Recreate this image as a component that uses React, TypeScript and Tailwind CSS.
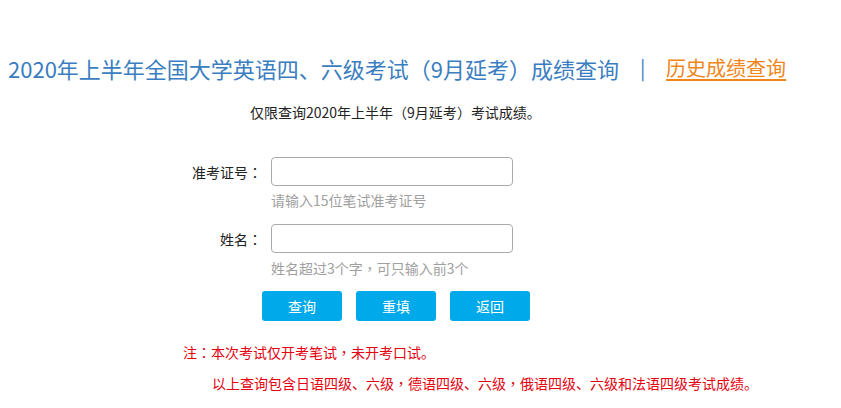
// full-width punctuation sits centred in its cell in the reference, which the TC cut of Noto does
function P({ children }: { children: string }) {
  return <span className="font-['Noto_Sans_CJK_TC',sans-serif]">{children}</span>
}

export default function App() {
  return (
    <div className="w-[841px] h-[408px] bg-white text-[#333] font-['Noto_Sans_CJK_SC','Noto_Sans',sans-serif] overflow-hidden">
      {/* title */}
      <div className="pt-[53px] pl-[8px] flex items-center h-[83px]">
        <h1 className="text-[22px] leading-[30px] text-[#3a7dc0] font-normal whitespace-nowrap">
          2020年上半年全国大学英语四、六级考试<P>（</P>9月延考<P>）</P>成绩查询
        </h1>
        <span className="w-[47px] text-center text-[20px] leading-[30px] text-[#3a7dc0]">|</span>
        <a href="#" className="text-[20px] leading-[30px] text-[#f08519] underline underline-offset-[3px] whitespace-nowrap">
          历史成绩查询
        </a>
      </div>

      <p className="mt-[19px] pl-[250px] text-[14px] leading-[20px] text-[#222]">
        仅限查询2020年上半年<P>（</P>9月延考<P>）</P>考试成绩。
      </p>

      {/* form */}
      <div className="mt-[35px]">
        <div className="flex items-center">
          <label className="w-[262px] text-right text-[14px] leading-[20px] text-[#222]">
            准考证号<P>：</P>
          </label>
          <input className="ml-[9px] w-[242px] h-[29px] border border-[#aaa] rounded-[4px] px-2 text-[14px] outline-none" />
        </div>
        <p className="mt-[4px] pl-[271px] text-[14px] leading-[20px] text-[#a0a0a0]">请输入15位笔试准考证号</p>

        <div className="mt-[14px] flex items-center">
          <label className="w-[262px] text-right text-[14px] leading-[20px] text-[#222]">
            姓名<P>：</P>
          </label>
          <input className="ml-[9px] w-[242px] h-[29px] border border-[#aaa] rounded-[4px] px-2 text-[14px] outline-none" />
        </div>
        <p className="mt-[5px] pl-[271px] text-[14px] leading-[20px] text-[#a0a0a0]">
          姓名超过3个字<P>，</P>可只输入前3个
        </p>

        <div className="mt-[13px] pl-[262px] flex gap-[14px]">
          {['查询', '重填', '返回'].map((t) => (
            <button
              key={t}
              className="w-[80px] h-[30px] rounded-[3px] bg-[#00aaea] text-white text-[14px] leading-[20px]"
            >
              {t}
            </button>
          ))}
        </div>
      </div>

      {/* notes */}
      <p className="mt-[21px] pl-[183px] text-[14px] leading-[20px] text-[#e4000f]">
        注<P>：</P>本次考试仅开考笔试<P>，</P>未开考口试。
      </p>
      <p className="mt-[11px] pl-[212px] text-[14px] leading-[20px] text-[#e4000f] whitespace-nowrap">
        以上查询包含日语四级、六级<P>，</P>德语四级、六级<P>，</P>俄语四级、六级和法语四级考试成绩。
      </p>
    </div>
  )
}
